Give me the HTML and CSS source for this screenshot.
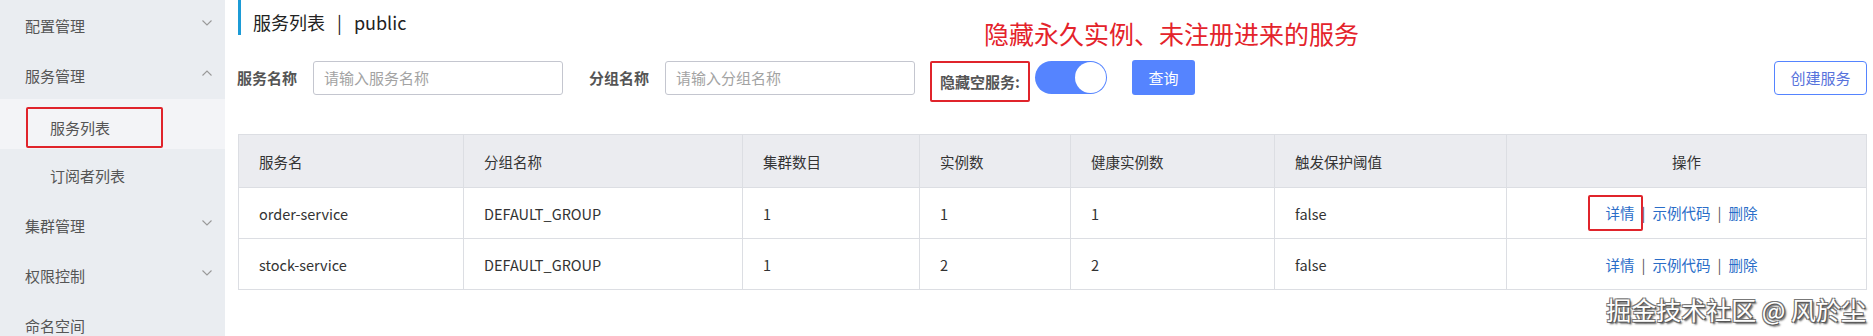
FILE: index.html
```html
<!DOCTYPE html>
<html lang="zh-CN">
<head>
<meta charset="utf-8">
<title>服务列表</title>
<link rel="stylesheet" href="styles.css">
</head>
<body>
<aside class="sidebar">
  <div class="menu-item"><span>配置管理</span><svg class="chev" viewBox="0 0 10 6"><path d="M0.5 0.5 L5 5 L9.5 0.5"/></svg></div>
  <div class="menu-item"><span>服务管理</span><svg class="chev" viewBox="0 0 10 6"><path d="M0.5 5.5 L5 1 L9.5 5.5"/></svg></div>
  <div class="menu-item sub active"><span class="mark-box">服务列表</span></div>
  <div class="menu-item sub"><span>订阅者列表</span></div>
  <div class="menu-item"><span>集群管理</span><svg class="chev" viewBox="0 0 10 6"><path d="M0.5 0.5 L5 5 L9.5 0.5"/></svg></div>
  <div class="menu-item"><span>权限控制</span><svg class="chev" viewBox="0 0 10 6"><path d="M0.5 0.5 L5 5 L9.5 0.5"/></svg></div>
  <div class="menu-item"><span>命名空间</span></div>
</aside>
<main class="main">
  <div class="page-title">服务列表<span class="title-sep">|</span>public</div>
  <div class="annotation">隐藏永久实例、未注册进来的服务</div>
  <div class="filters">
    <label class="f-label">服务名称</label>
    <input class="f-input" placeholder="请输入服务名称">
    <label class="f-label second">分组名称</label>
    <input class="f-input" placeholder="请输入分组名称">
    <span class="f-label boxed">隐藏空服务:</span>
    <span class="switch"><span class="knob"></span></span>
    <button class="btn-primary">查询</button>
    <span class="spacer"></span>
    <button class="btn-normal">创建服务</button>
  </div>
  <table class="grid">
    <colgroup>
      <col style="width:225px"><col style="width:279px"><col style="width:177px"><col style="width:151px"><col style="width:204px"><col style="width:232px"><col style="width:360px">
    </colgroup>
    <thead>
      <tr><th>服务名</th><th>分组名称</th><th>集群数目</th><th>实例数</th><th>健康实例数</th><th>触发保护阈值</th><th class="ops-head">操作</th></tr>
    </thead>
    <tbody>
      <tr><td>order-service</td><td>DEFAULT_GROUP</td><td>1</td><td>1</td><td>1</td><td>false</td>
        <td class="ops"><a class="link boxed-link">详情</a><span class="sep">|</span><a class="link">示例代码</a><span class="sep">|</span><a class="link">删除</a></td></tr>
      <tr><td>stock-service</td><td>DEFAULT_GROUP</td><td>1</td><td>2</td><td>2</td><td>false</td>
        <td class="ops"><a class="link">详情</a><span class="sep">|</span><a class="link">示例代码</a><span class="sep">|</span><a class="link">删除</a></td></tr>
    </tbody>
  </table>
  <div class="watermark">掘金技术社区 @ 风於尘</div>
</main>
</body>
</html>
```
FILE: styles.css
```css
* { box-sizing: border-box; }
html, body { margin: 0; padding: 0; }
body {
  display: flex;
  width: 1873px;
  height: 336px;
  overflow: hidden;
  background: #fff;
  font-family: "Noto Sans CJK SC", "Noto Sans", sans-serif;
  color: #333;
}
.sidebar {
  width: 225px;
  flex: none;
  background: #eaedf1;
  margin-top: -1px;
}
.menu-item {
  height: 50px;
  padding: 3px 13px 0 25px;
  display: flex;
  align-items: center;
  justify-content: space-between;
  font-size: 15px;
  color: #555;
}
.menu-item.sub { padding-left: 50px; }
.menu-item.active { background: #f3f4f7; padding-left: 26px; }
.mark-box {
  border: 2px solid #e0242b;
  border-radius: 2px;
  width: 137px;
  height: 41px;
  margin-top: 3px;
  padding-left: 22px;
  display: flex;
  align-items: center;
}
.chev {
  width: 10px;
  height: 6px;
  fill: none;
  stroke: #999;
  stroke-width: 1.1;
  margin-top: -6px;
}
.main {
  position: relative;
  flex: 1;
  padding: 0 7px 0 13px;
}
.page-title {
  height: 35px;
  border-left: 3px solid #1c9bd6;
  padding: 8px 0 0 12px;
  line-height: 28px;
  font-size: 18px;
  color: #222;
}
.title-sep { margin: 0 12px; }
.annotation {
  position: absolute;
  left: 759px;
  top: 15px;
  font-size: 25px;
  line-height: 36px;
  color: #e4232b;
}
.filters {
  margin-top: 25px;
  height: 35px;
  display: flex;
  align-items: center;
}
.f-label {
  font-size: 15px;
  font-weight: bold;
  color: #555;
  margin-left: -1px;
  margin-right: 16px;
}
.f-label.second { margin-left: 26px; }
.f-input {
  width: 250px;
  height: 34px;
  border: 1px solid #c4c6cf;
  border-radius: 3px;
  padding: 0 10px;
  font-family: inherit;
  font-size: 15px;
  color: #333;
  outline: none;
}
.f-input::placeholder { color: #a3a3a3; }
.f-label.boxed {
  margin-left: 15px;
  margin-right: 5px;
  width: 100px;
  height: 41px;
  border: 2px solid #e0242b;
  border-radius: 2px;
  padding-left: 8px;
  display: flex;
  align-items: center;
  margin-top: 7px;
}
.switch {
  width: 72px;
  height: 33px;
  border-radius: 17px;
  background: #5584ff;
  display: flex;
  align-items: center;
  justify-content: flex-end;
  padding-right: 1px;
}
.knob {
  width: 31px;
  height: 31px;
  border-radius: 50%;
  background: #fff;
}
.btn-primary {
  margin-left: 25px;
  width: 63px;
  height: 35px;
  border: none;
  border-radius: 3px;
  background: #5584ff;
  color: #fff;
  font-family: inherit;
  font-size: 15px;
}
.spacer { flex: 1; }
.btn-normal {
  width: 93px;
  height: 34px;
  border: 1px solid #5584ff;
  border-radius: 4px;
  background: #fff;
  color: #5772dc;
  font-family: inherit;
  font-size: 15px;
}
.grid {
  margin-top: 39px;
  width: 1628px;
  table-layout: fixed;
  border-collapse: collapse;
  font-size: 14.5px;
}
.grid th, .grid td {
  border: 1px solid #dcdee3;
  text-align: left;
  padding: 0 20px;
  font-weight: normal;
  color: #333;
  white-space: nowrap;
}
.grid th { height: 53px; background: #ebecf0; }
.grid td { height: 51px; }
.grid .ops-head { text-align: center; }
.grid .ops { text-align: center; padding: 0 30px 0 20px; }
.link { color: #2a6dc8; }
.sep { color: #555; margin: 0 7px; }
.boxed-link {
  display: inline-block;
  border: 2px solid #e0242b;
  border-radius: 2px;
  padding: 0 6px 0 16px;
  line-height: 32px;
  margin-left: -18px;
  margin-right: -8px;
}
.watermark {
  position: absolute;
  right: 8px;
  top: 291px;
  font-size: 25px;
  line-height: 36px;
  color: #fff;
  text-shadow: 1px 1px 0 #555, -1px -1px 0 #777, 1px -1px 0 #777, -1px 1px 0 #777, 2px 2px 2px #444;
}
```
